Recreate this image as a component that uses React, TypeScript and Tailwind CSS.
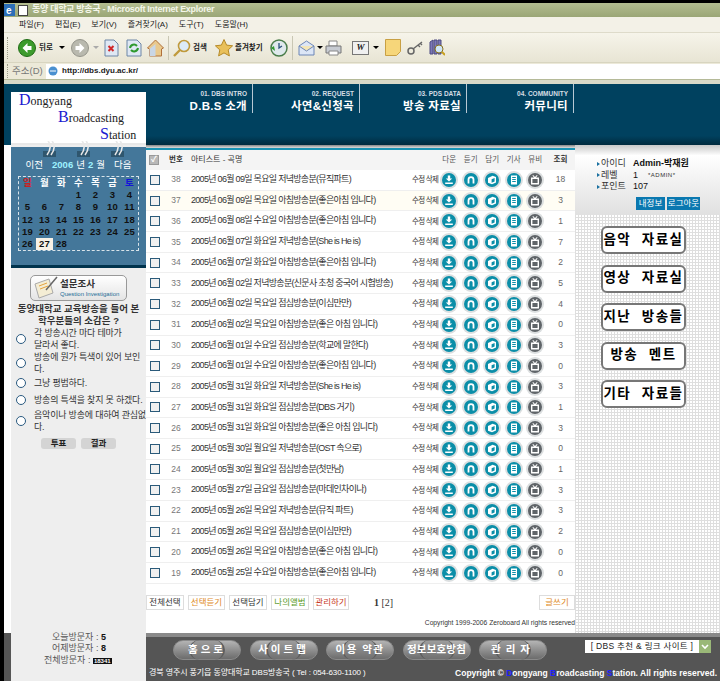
const rows = [
  ['38', '2005년 06월 09일 목요일 저녁방송분(뮤직파트)', '18'],
  ['37', '2005년 06월 09일 목요일 아침방송분(좋은아침 입니다)', '3'],
  ['36', '2005년 06월 08일 수요일 아침방송분(좋은아침 입니다)', '1'],
  ['35', '2005년 06월 07일 화요일 저녁방송분(She is He is)', '7'],
  ['34', '2005년 06월 07일 화요일 아침방송분(좋은아침 입니다)', '2'],
  ['33', '2005년 06월 02일 저녁방송분(신문사 초청 중국어 시험방송)', '5'],
  ['32', '2005년 06월 02일 목요일 점심방송분(이심만만)', '4'],
  ['31', '2005년 06월 02일 목요일 아침방송분(좋은 아침 입니다)', '0'],
  ['30', '2005년 06월 01일 수요일 점심방송분(학교에 말한다)', '3'],
  ['29', '2005년 06월 01일 수요일 아침방송분(좋은아침 입니다)', '0'],
  ['28', '2005년 05월 31일 화요일 저녁방송분(She is He is)', '3'],
  ['27', '2005년 05월 31일 화요일 점심방송분(DBS 거기)', '1'],
  ['26', '2005년 05월 31일 화요일 아침방송분(좋은 아침 입니다)', '3'],
  ['25', '2005년 05월 30일 월요일 저녁방송분(OST 속으로)', '0'],
  ['24', '2005년 05월 30일 월요일 점심방송분(첫만남)', '1'],
  ['23', '2005년 05월 27일 금요일 점심방송분(마데인차이나)', '3'],
  ['22', '2005년 05월 26일 목요일 저녁방송분(뮤직 파트)', '3'],
  ['21', '2005년 05월 26일 목요일 점심방송분(이심만만)', '2'],
  ['20', '2005년 05월 26일 목요일 아침방송분(좋은 아침 입니다)', '0'],
  ['19', '2005년 05월 25일 수요일 아침방송분(좋은아침 입니다)', '0'],
]

const calendarDays = ['', '', '', '1', '2', '3', '4', '5', '6', '7', '8', '9', '10', '11', '12', '13', '14', '15', '16', '17', '18', '19', '20', '21', '22', '23', '24', '25', '26', '27', '28']

function RowIcon({ kind }: { kind: string }) {
  const fill = kind === 'tv' ? '#5f6468' : '#0b8ea8'
  return (
    <svg width="18" height="18" viewBox="0 0 18 18" className="mx-auto block">
      <circle cx="9" cy="9" r="9" fill="#dcdfe0" />
      <circle cx="9" cy="9" r="7" fill={fill} />
      {kind === 'down' && <path d="M7.8 4.5h2.4v3h2L9 10.6 5.8 7.5h2zM5.2 11.5h7.6v1.6H5.2z" fill="#fff" />}
      {kind === 'phones' && <path d="M5.6 12.5V8.6a3.4 3.4 0 0 1 6.8 0v3.9h-1.8V8.6a1.6 1.6 0 0 0-3.2 0v3.9z" fill="#fff" />}
      {kind === 'box' && <path d="M5 7l4.6-2.3L13 6v5.4l-4 1.8-4-1.4zM8.6 8.2v3.6l3-1.3V7z" fill="#fff" />}
      {kind === 'doc' && <path d="M6 4.5h6v9H6zM7.2 6v.9h3.6V6zm0 2v.9h3.6V8zm0 2v.9h3.6V10z" fill="#fff" fillRule="evenodd" />}
      {kind === 'tv' && <path d="M5 6.5h3l-1.6-2 .7-.4L9 6l1.9-1.9.7.4-1.6 2h3v7H5zM6.4 8v4h5.2V8z" fill="#fff" fillRule="evenodd" />}
    </svg>
  )
}

function Grip() {
  return <span className="mx-[3px] h-[14px] w-[2px] border-l border-dotted border-[#9a9a88]" />
}

function Caret() {
  return <span className="h-0 w-0 border-x-[3px] border-t-[3px] border-x-transparent border-t-black" />
}

function Binder() {
  return (
    <svg width="16" height="16" viewBox="0 0 16 16" className="block">
      <rect x="0" y="10" width="13" height="6" fill="#2f566e" />
      <path d="M5 0c3 3 3 9-1 14M9 0c3 3 3 9-1 14" stroke="#e8e8e8" strokeWidth="1.6" fill="none" />
    </svg>
  )
}

function Toolbar() {
  return (
    <div className="flex h-[30px] items-center border-b border-[#d8d5c0] bg-gradient-to-b from-[#f6f4ea] to-[#e8e5d4] pl-[3px] text-[7.5px] font-bold whitespace-nowrap text-[#222]">
      <span className="mr-[10px] h-[22px] border-l border-dotted border-[#9a9a88]" />
      <svg width="18" height="18" viewBox="0 0 18 18"><circle cx="9" cy="9" r="8.5" fill="#3d9b2d" stroke="#1f6b15" /><path d="M9.5 4L4.5 9l5 5V11h4V7h-4z" fill="#fff" /></svg>
      <span className="ml-[3px] mr-[6px] w-[14px]">뒤로</span>
      <Caret />
      <svg className="ml-[6px]" width="18" height="18" viewBox="0 0 18 18"><circle cx="9" cy="9" r="8.5" fill="#b9b9ae" stroke="#96968c" /><path d="M8.5 4l5 5-5 5V11h-4V7h4z" fill="#fff" /></svg>
      <span className="ml-[4px] h-0 w-0 border-x-[3px] border-t-[3px] border-x-transparent border-t-[#aaa]" />
      <svg className="ml-[4px]" width="17" height="18" viewBox="0 0 17 18"><path d="M2 1h9l4 4v12H2z" fill="#dfe8f4" stroke="#6d86a6" /><path d="M5.5 7l5 5m0-5l-5 5" stroke="#d0282a" strokeWidth="2" /></svg>
      <svg className="ml-[6px]" width="16" height="18" viewBox="0 0 16 18"><path d="M1 1h10l4 4v12H1z" fill="#dfe8f4" stroke="#6d86a6" /><path d="M4 9a4 4 0 0 1 7-2M12 9a4 4 0 0 1-7 2" stroke="#2e9a2e" strokeWidth="2" fill="none" /></svg>
      <svg className="ml-[5px]" width="17" height="18" viewBox="0 0 17 18"><path d="M8.5 1L0.5 9l2 1v7h12v-7l2-1z" fill="#e9c98d" stroke="#b0703a" /><path d="M2.5 10v7h6V5z" fill="#c9d6e6" /></svg>
      <span className="ml-[4px] mr-[4px] h-[24px] border-l border-[#c9c7b4]" />
      <svg width="18" height="18" viewBox="0 0 18 18"><circle cx="11" cy="7" r="5.5" fill="#dcebf8" stroke="#c09a3c" strokeWidth="1.6" /><path d="M7 11l-6 6" stroke="#c09a3c" strokeWidth="2.4" /></svg>
      <span className="ml-[2px] w-[15px]">검색</span>
      <svg className="ml-[7px]" width="18" height="18" viewBox="0 0 18 18"><path d="M9 0.5l2.6 5.6 6 .7-4.4 4.1 1.2 6-5.4-3-5.4 3 1.2-6L0.4 6.8l6-.7z" fill="#e9c05a" stroke="#b58a2a" /></svg>
      <span className="ml-[2px] w-[27px]">즐겨찾기</span>
      <svg className="ml-[8px]" width="18" height="18" viewBox="0 0 18 18"><circle cx="9" cy="9" r="8" fill="#dfe9ec" stroke="#4a7d4a" strokeWidth="1.5" /><path d="M9 4v5l3-2" stroke="#28507a" strokeWidth="1.3" fill="none" /><path d="M1 9l4 3-1-5z" fill="#2e9a2e" /></svg>
      <span className="ml-[4px] mr-[5px] h-[24px] border-l border-[#c9c7b4]" />
      <svg width="17" height="16" viewBox="0 0 17 16"><path d="M1 6l7.5-5L16 6v9H1z" fill="#dce6f6" stroke="#6d86b6" /><path d="M1 6l7.5 5L16 6" fill="#f3e6b8" stroke="#6d86b6" /></svg>
      <span className="ml-[2px] flex"><Caret /></span>
      <svg className="ml-[2px]" width="17" height="16" viewBox="0 0 17 16"><path d="M4 1h8v5H4z" fill="#fff" stroke="#888" /><path d="M1 6h15v7H1z" fill="#c7cbd2" stroke="#777" /><path d="M4 11h9v4H4z" fill="#fff" stroke="#888" /></svg>
      <div className="ml-[10px] flex h-[14px] w-[17px] items-center justify-center border border-[#777] bg-[#f0f0f0] font-['Liberation_Serif',serif] text-[9px] italic">W</div>
      <span className="ml-[4px] flex"><Caret /></span>
      <svg className="ml-[6px]" width="16" height="17" viewBox="0 0 16 17"><path d="M0.5 0.5h15v12l-4 4h-11z" fill="#f6d67a" stroke="#c8a044" /></svg>
      <svg className="ml-[6px]" width="17" height="14" viewBox="0 0 17 14"><circle cx="4" cy="10" r="3" fill="none" stroke="#666" strokeWidth="1.5" /><path d="M6 8l9-7M11 4l2 2M13 2l2 2" stroke="#666" strokeWidth="1.4" /></svg>
      <svg className="ml-[5px]" width="16" height="17" viewBox="0 0 16 17"><path d="M1 3l3-2v14H1zM5 1h3v14H5zM9 1h3v14H9z" fill="#7c78b8" stroke="#4c4a80" /><circle cx="10" cy="10" r="4" fill="#cfe6f7" stroke="#88701c" /><path d="M13 13l3 3" stroke="#c8a020" strokeWidth="2" /></svg>
    </div>
  )
}

function Pill({ label, tracking }: { label: string; tracking: string }) {
  return (
    <div className="relative flex h-[20px] w-[68px] items-center justify-center rounded-full border border-[#8a8a8a] bg-gradient-to-b from-[#b4b4b4] to-[#6c6c6c]">
      <span className="h-[20px] w-[36px] rounded-full border-x-2 border-[#5e5e5e] bg-[#777]/40" />
      <span className={`absolute inset-0 flex items-center justify-center text-[10.5px] font-bold whitespace-nowrap text-white ${tracking}`}>{label}</span>
    </div>
  )
}

export default function App() {
  return (
    <div className="h-[681px] w-[720px] overflow-hidden bg-black font-['Liberation_Sans','Noto_Sans_CJK_KR',sans-serif]">
      {/* Browser chrome */}
      <div className="pt-[3px] pl-[4px]">
        <div className="flex h-[14px] items-center bg-gradient-to-b from-[#b3bd90] to-[#9aa676] text-[9px] font-bold tracking-[-0.3px] whitespace-nowrap text-[#f4f6ea]">
          <svg width="11" height="12" viewBox="0 0 11 12"><rect width="11" height="12" fill="#2c6eb8" /><text x="2" y="10" fontSize="10" fill="#fff" fontWeight="700">e</text></svg>
          <span className="ml-[3px] h-[11px] w-[10px] border border-[#444] bg-white" />
          <span className="ml-[4px]">동양 대학교 방송국 - Microsoft Internet Explorer</span>
        </div>
        <div className="flex h-[16px] items-center gap-[11px] border-b border-[#dedbca] bg-[#f3f1e7] pl-[15px] text-[8px] whitespace-nowrap text-[#222]">
          <span>파일(F)</span>
          <span>편집(E)</span>
          <span>보기(V)</span>
          <span>즐겨찾기(A)</span>
          <span>도구(T)</span>
          <span>도움말(H)</span>
        </div>
        <Toolbar />
        <div className="flex h-[16px] items-center bg-[#ece9d8] text-[9.5px] whitespace-nowrap">
          <Grip />
          <span className="w-[34px] text-[#777]">주소(D)</span>
          <div className="flex h-[15px] flex-1 items-center bg-white pl-[2px] text-[8px] font-bold text-[#222]">
            <svg width="10" height="10" viewBox="0 0 10 10"><circle cx="5" cy="5" r="4.5" fill="#4a90d0" /><path d="M2 5h6" stroke="#fff" /></svg>
            <span className="ml-[4px]">http://dbs.dyu.ac.kr/</span>
          </div>
        </div>
        <div className="h-[5px] border-t border-[#b5ba98] bg-[#d8d8c8]" />
      </div>

      <div className="flex h-[597px] pl-[4px]">
        <div className="flex w-[7px] flex-col">
          <div className="h-[61px] bg-[#00415f]" />
          <div className="flex-1 bg-white" />
          <div className="h-[48px] bg-[#555]" />
        </div>

        <div className="flex w-[709px] flex-col">
          {/* Header */}
          <div className="flex h-[61px] bg-gradient-to-b from-[#00415f] from-85% to-[#002a3e] whitespace-nowrap">
            <div className="w-[135px] pt-[8px]">
              <div className="flex h-[53px] flex-col bg-white font-['Liberation_Serif',serif] text-[12px] leading-[15px] text-[#222]">
                <div className="pl-[8px]"><span className="text-[16px] text-[#1a1ad0]">D</span>ongyang</div>
                <div className="pl-[47px]"><span className="text-[16px] text-[#1a1ad0]">B</span>roadcasting</div>
                <div className="pl-[89px]"><span className="text-[16px] text-[#1a1ad0]">S</span>tation</div>
                <div className="mt-auto h-[6px] bg-[#e8e8e8]" />
              </div>
            </div>
            {[
              ['01. DBS INTRO', 'D.B.S 소개'],
              ['02. REQUEST', '사연&신청곡'],
              ['03. PDS DATA', '방송 자료실'],
              ['04. COMMUNITY', '커뮤니티'],
            ].map(([small, title]) => (
              <div key={small} className="flex h-[29px] w-[107px] flex-col items-end justify-start border-r border-[#b8c8d4] pt-[5px] pr-[5px] text-white">
                <span className="text-[6.5px] leading-[9px] font-bold text-[#d4dde4]">{small}</span>
                <span className="mt-[2px] text-[11.5px] leading-[13px] font-bold tracking-[0.3px]">{title}</span>
              </div>
            ))}
          </div>

          <div className="flex flex-1">
            {/* Left column */}
            <div className="flex w-[135px] flex-col bg-[#eeeeee] pt-[2px]">
              <div className="relative h-[121px] border-b-[3px] border-[#00334d] bg-[#44779a] pt-[12px] text-white">
                <div className="absolute -top-[6px] left-[32px] flex gap-[18px]">
                  <Binder />
                  <Binder />
                  <Binder />
                </div>
                <div className="flex justify-center gap-[3px] text-[9.5px] leading-[12px] whitespace-nowrap">
                  <span className="mr-[6px]">이전</span>
                  <span className="font-bold text-[#9ff2ff]">2006</span>
                  <span>년</span>
                  <span className="font-bold text-[#9ff2ff]">2</span>
                  <span>월</span>
                  <span className="ml-[6px]">다음</span>
                </div>
                <div className="mx-[7px] mt-[5px] grid h-[75px] grid-cols-7 grid-rows-6 border border-dashed border-[#d9e4ea] text-center text-[9.5px] leading-[12px] font-bold tracking-[0.3px] text-[#111]">
                  <span className="text-[#cc2020]">일</span>
                  {['월', '화', '수', '목', '금'].map(d => (
                    <span key={d} className="text-white">{d}</span>
                  ))}
                  <span className="text-[#1414d8]">토</span>
                  {calendarDays.map((d, i) => (
                    <span key={i} className={d === '27' ? 'bg-[#f7f1e6]' : ''}>{d}</span>
                  ))}
                </div>
              </div>

              <div className="mx-[19px] mt-[7px] flex h-[26px] w-[97px] items-center rounded-[5px] border border-[#999] bg-gradient-to-b from-white to-[#e4e4e4] pl-[3px]">
                <svg width="24" height="24" viewBox="0 0 24 24">
                  <path d="M1 8l14-5 4 14-14 5z" fill="#f4edd4" stroke="#aaa" />
                  <path d="M5 10l8-3M6 13l8-3" stroke="#e4a23c" />
                  <path d="M12 14L23 1" stroke="#666" strokeWidth="1.5" />
                </svg>
                <div className="ml-[2px] flex flex-col">
                  <span className="text-[9.5px] leading-[12px] font-bold text-[#333]">설문조사</span>
                  <span className="text-[6px] leading-[8px] whitespace-nowrap text-[#1e6e96]">Question Investigation</span>
                </div>
              </div>

              <p className="mt-[2px] px-[6px] text-center text-[9.5px] leading-[12px] font-bold text-[#333]">동양대학교 교육방송을 들어 본 학우분들의 소감은 ?</p>
              <div className="flex flex-col text-[9px] leading-[12px] tracking-[-0.2px] text-[#333]">
                {[
                  ['각 방송시간 마다 테마가\n달라서 좋다.', 'mt-0'],
                  ['방송에 뭔가 특색이 있어 보인\n다.', 'mt-0'],
                  ['그냥 평범하다.', 'mt-[2px]'],
                  ['방송의 특색을 찾지 못 하겠다.', 'mt-[5px]'],
                  ['음악이나 방송에 대하여 관심없\n다.', 'mt-[3px]'],
                ].map(([text, top]) => (
                  <label key={text} className={`flex items-center ${top}`}>
                    <span className="ml-[5px] h-[10px] w-[10px] flex-none rounded-full border-[1.5px] border-[#2a5a80] bg-white" />
                    <span className="ml-[8px] whitespace-pre-line">{text}</span>
                  </label>
                ))}
              </div>
              <div className="mt-[5px] ml-[30px] flex gap-[5px]">
                <span className="flex h-[11px] w-[35px] items-center justify-center rounded-[3px] bg-[#d4d4d4] text-[8.5px] font-bold text-[#222]">투표</span>
                <span className="flex h-[11px] w-[35px] items-center justify-center rounded-[3px] bg-[#d4d4d4] text-[8.5px] font-bold text-[#222]">결과</span>
              </div>
              <div className="mt-auto mb-[14px] flex flex-col text-[9px] leading-[11.5px] whitespace-nowrap text-[#555]">
                <div className="pl-[41px]">오늘방문자 : <span className="font-bold text-[#111]">5</span></div>
                <div className="pl-[41px]">어제방문자 : <span className="font-bold text-[#111]">8</span></div>
                <div className="pl-[33px]">전체방문자 : <span className="bg-[#111] px-[1px] text-[6px] font-bold text-white">18341</span></div>
              </div>
            </div>

            <div className="flex w-[574px] flex-col">
              <div className="flex flex-1">
                {/* Board */}
                <div className="flex w-[429px] flex-none flex-col bg-white">
                  <div className="h-[3px] bg-gradient-to-b from-[#888] to-[#ddd]" />
                  <div className="h-[2px] bg-[#1a94b4]" />
                  <div className="flex h-[20px] items-center bg-[#f4f4f4] text-[8px] whitespace-nowrap text-[#333]">
                    <span className="ml-[3px] flex h-[10px] w-[10px] items-center justify-center border border-[#999] bg-[#b8b8b8] text-[8px] leading-none font-bold text-white">✓</span>
                    <span className="ml-[10px] w-[22px] flex-none text-[7.5px] font-bold">번호</span>
                    <span>아티스트 - 곡명</span>
                    <div className="ml-auto flex text-[7.5px]">
                      {['다운', '듣기', '담기', '기사', '뮤비'].map(h => (
                        <span key={h} className="w-[21.5px] flex-none text-center text-[#555]">{h}</span>
                      ))}
                      <span className="w-[29px] flex-none text-center font-bold">조회</span>
                    </div>
                  </div>
                  {rows.map(([no, title, hits]) => (
                    <div key={no} className={`flex h-[20.7px] items-center border-b border-[#efefef] whitespace-nowrap text-[#333] ${no === '37' ? 'bg-[#fffdf4]' : ''}`}>
                      <span className="ml-[4px] h-[10px] w-[10px] flex-none border border-[#2a5a7a] bg-[#f0f0f0]" />
                      <span className="ml-[4px] w-[24px] flex-none text-center text-[8.5px] text-[#777]">{no}</span>
                      <span className="ml-[3px] w-[221px] flex-none text-[9px] tracking-[-0.7px]">{title}</span>
                      <span className="w-[26.5px] flex-none text-[7.5px] tracking-[-0.7px]">수정 삭제</span>
                      <div className="flex flex-none">
                        <div className="w-[21.5px]"><RowIcon kind="down" /></div>
                        <div className="w-[21.5px]"><RowIcon kind="phones" /></div>
                        <div className="w-[21.5px]"><RowIcon kind="box" /></div>
                        <div className="w-[21.5px]"><RowIcon kind="doc" /></div>
                        <div className="w-[21.5px]"><RowIcon kind="tv" /></div>
                      </div>
                      <span className="w-[29px] flex-none text-center text-[8.5px] text-[#666]">{hits}</span>
                    </div>
                  ))}
                  <div className="mt-[11px] flex items-center gap-[4px] text-[8.5px] whitespace-nowrap">
                    <span className="flex h-[15px] w-[38px] items-center justify-center border border-[#ddd] text-[#333]">전체선택</span>
                    <span className="flex h-[15px] w-[37px] items-center justify-center border border-[#ddd] text-[#e08a1e]">선택듣기</span>
                    <span className="flex h-[15px] w-[38px] items-center justify-center border border-[#ddd] text-[#333]">선택담기</span>
                    <span className="flex h-[15px] w-[38px] items-center justify-center border border-[#ddd] text-[#5a9a2a]">나의앨범</span>
                    <span className="flex h-[15px] w-[36px] items-center justify-center border border-[#ddd] text-[#c83a1e]">관리하기</span>
                    <span className="ml-[21px] font-['Liberation_Serif',serif] text-[10px] text-[#333]"><b>1</b> [2]</span>
                    <span className="ml-auto flex h-[15px] w-[36px] items-center justify-center border border-[#ddd] text-[#e08a1e]">글쓰기</span>
                  </div>
                  <div className="mt-[8px] text-right text-[6.7px] whitespace-nowrap text-[#333]">Copyright 1999-2006 Zeroboard All rights reserved</div>
                </div>

                {/* Right column */}
                <div className="flex w-[145px] flex-col bg-white bg-[linear-gradient(#dedede_1px,transparent_1px),linear-gradient(90deg,#dedede_1px,transparent_1px)] bg-[length:3px_3px]">
                  <div className="flex h-[70px] flex-col bg-gradient-to-b from-[#c8c8c8] from-0% via-white via-15% to-[#e0e0e0] pt-[13px] pl-[22px] text-[9px] leading-[11.5px] whitespace-nowrap text-[#333]">
                    {[
                      ['아이디', 'Admin-박재원'],
                      ['레벨', '1'],
                      ['포인트', '107'],
                    ].map(([k, v]) => (
                      <div key={k} className="flex items-center">
                        <span className="mr-[1px] h-0 w-0 border-y-[2.5px] border-l-[3px] border-y-transparent border-l-[#1a70a0]" />
                        <span className="w-[32px]">{k}</span>
                        <span className={k === '아이디' ? 'font-bold text-[#111]' : 'text-[#111]'}>{v}</span>
                        {k === '레벨' && <span className="ml-[10px] text-[6px] tracking-[0.5px]">*ADMIN*</span>}
                      </div>
                    ))}
                    <div className="mt-[4px] ml-[39px] flex gap-[2px] text-[8.5px] leading-[13px] text-white">
                      <span className="w-[29px] bg-[#0a78b0] text-center">내정보</span>
                      <span className="w-[33px] bg-[#0a78b0] text-center">로그아웃</span>
                    </div>
                  </div>
                  <div className="mt-[11px] ml-[26px] flex w-[85px] flex-col gap-[10.5px]">
                    {['음악 자료실', '영상 자료실', '지난 방송들', '방송 멘트', '기타 자료들'].map(b => (
                      <span key={b} className="flex h-[28px] items-center justify-center rounded-[6px] border-2 border-[#777] bg-white text-[13.5px] font-bold tracking-[1.5px] whitespace-pre text-black">{b.replace(' ', '  ')}</span>
                    ))}
                  </div>
                </div>
              </div>

              {/* Footer */}
              <div className="flex h-[48px] flex-col border-t-[4px] border-[#8a8a8a] bg-[#555] whitespace-nowrap text-white">
                <div className="flex h-[30px] items-start pt-[3px]">
                  <div className="ml-[27px] flex gap-[8.5px]">
                    <Pill label="홈으로" tracking="tracking-[3px]" />
                    <Pill label="사이트맵" tracking="tracking-[3px]" />
                    <Pill label="이용 약관" tracking="tracking-[1.5px]" />
                    <Pill label="정보보호방침" tracking="tracking-[0.2px]" />
                    <Pill label="관리자" tracking="tracking-[5px]" />
                  </div>
                  <div className="ml-[38px] flex h-[13px] items-center">
                    <span className="w-[114px] bg-white text-center text-[8.5px] leading-[13px] tracking-[0.3px] text-[#222]">[ DBS 추천 &amp; 링크 사이트 ]</span>
                    <svg width="12" height="13" viewBox="0 0 12 13"><rect width="12" height="13" fill="#9ab878" /><path d="M3 5l3 3 3-3" stroke="#fff" strokeWidth="1.6" fill="none" /></svg>
                  </div>
                </div>
                <div className="flex items-center pl-[3px] leading-[12px]">
                  <span className="text-[8px] tracking-[-0.1px]">경북 영주시 풍기읍 동양대학교 DBS방송국 ( Tel : 054-630-1100 )</span>
                  <span className="ml-auto pr-[3px] text-[8.5px] font-bold">Copyright © <span className="text-[#2020ff]">D</span>ongyang <span className="text-[#2020ff]">B</span>roadcasting <span className="text-[#2020ff]">S</span>tation. All rights reserved.</span>
                </div>
              </div>
            </div>
          </div>
        </div>
      </div>
    </div>
  )
}
